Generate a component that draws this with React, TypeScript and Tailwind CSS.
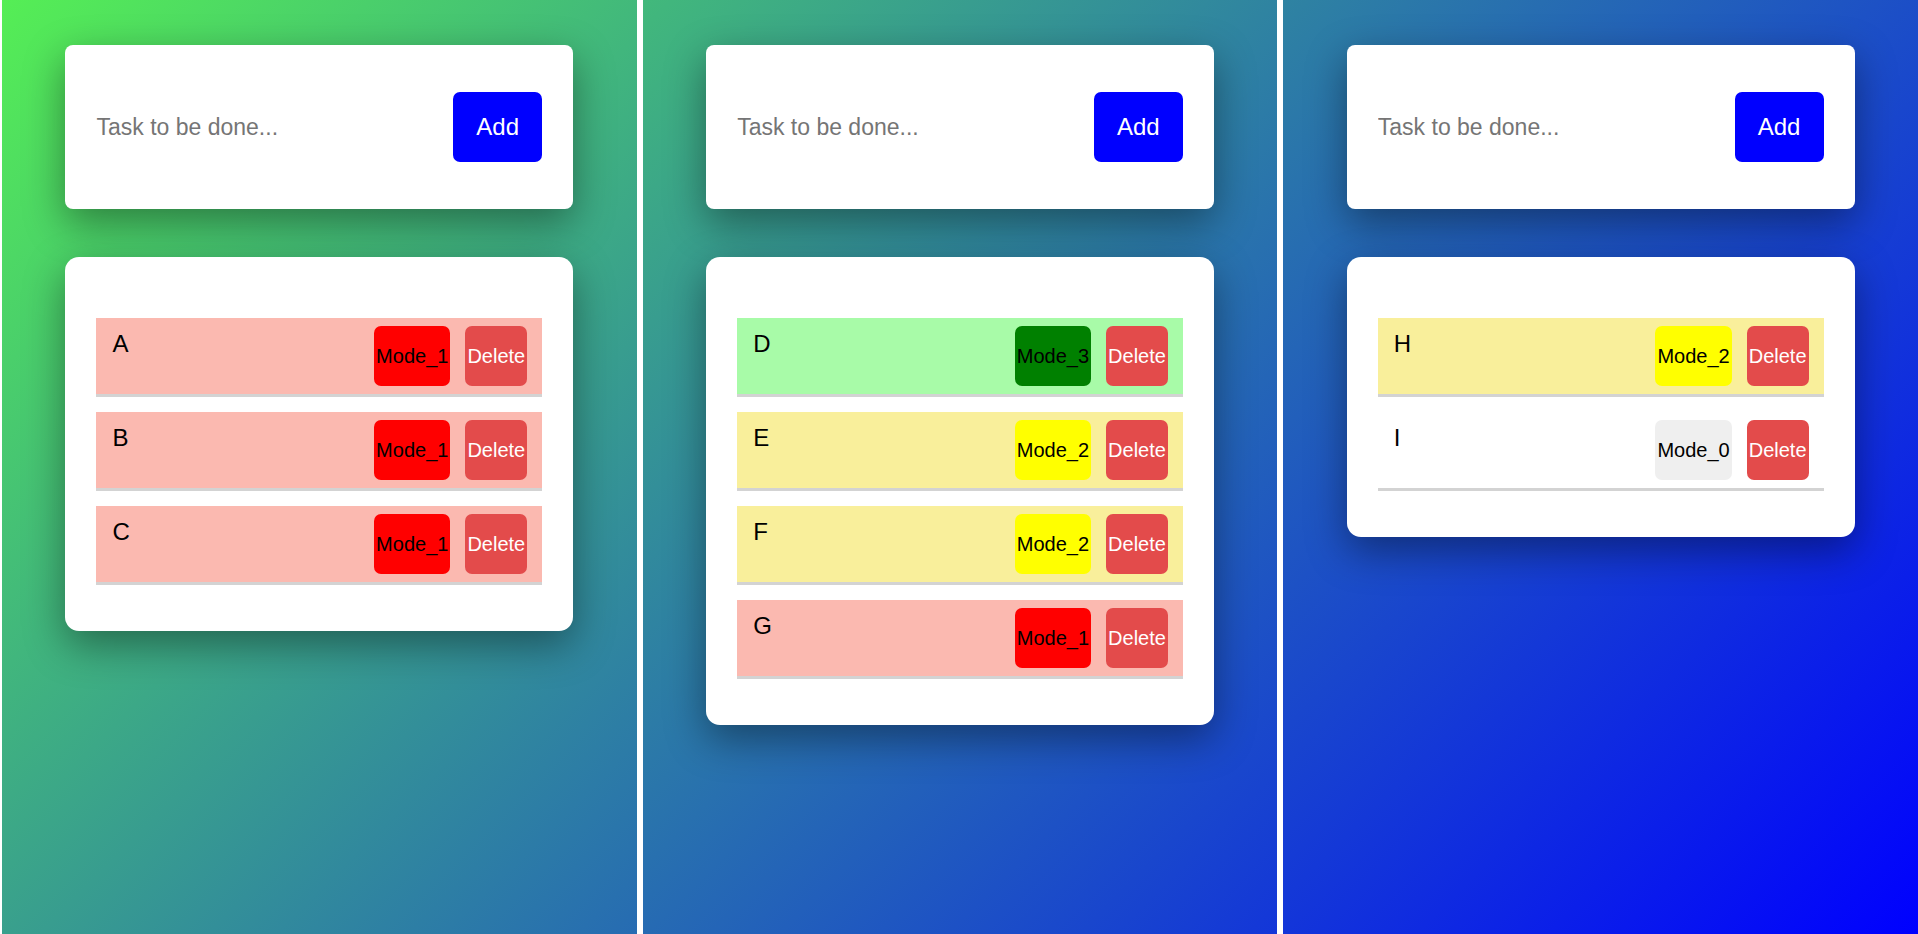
type Task = { label: string; mode: 0 | 1 | 2 | 3 };

const modeStyles = {
  0: { row: 'bg-white', btn: 'bg-[#efefef]' },
  1: { row: 'bg-[#fbb9b0]', btn: 'bg-[#ff0000]' },
  2: { row: 'bg-[#f9ef9b]', btn: 'bg-[#ffff00]' },
  3: { row: 'bg-[#a8fba8]', btn: 'bg-[#008000]' },
};

const columns: Task[][] = [
  [
    { label: 'A', mode: 1 },
    { label: 'B', mode: 1 },
    { label: 'C', mode: 1 },
  ],
  [
    { label: 'D', mode: 3 },
    { label: 'E', mode: 2 },
    { label: 'F', mode: 2 },
    { label: 'G', mode: 1 },
  ],
  [
    { label: 'H', mode: 2 },
    { label: 'I', mode: 0 },
  ],
];

function TodoRow({ task }: { task: Task }) {
  const s = modeStyles[task.mode];
  return (
    <div className={`${s.row} flex items-start justify-between pl-4 pr-[15px] py-2 border-b-[3px] border-[#d3d3d3]`}>
      <span className="text-[24px] text-black">{task.label}</span>
      <div className="flex gap-[15px]">
        <button className={`${s.btn} h-[60px] px-[2px] rounded-[7px] text-[20px] text-black`}>
          Mode_{task.mode}
        </button>
        <button className="bg-[#e34b4b] h-[60px] px-[2px] rounded-[7px] text-[20px] text-white">
          Delete
        </button>
      </div>
    </div>
  );
}

function TodoColumn({ tasks }: { tasks: Task[] }) {
  return (
    <div className="flex-1 flex flex-col items-center pt-[45px]">
      {/* input card */}
      <div className="w-[80%] bg-white rounded-lg px-[31px] py-[47px] flex items-center justify-between shadow-[0_14px_40px_rgba(0,0,0,0.4)]">
        <input
          className="flex-1 min-w-0 text-[23px] text-black placeholder:text-[#757575] outline-none bg-transparent"
          placeholder="Task to be done..."
        />
        <button className="w-[89px] h-[70px] bg-[#0000ff] text-white text-[24px] rounded-[7px]">Add</button>
      </div>

      {/* list card */}
      <div className="w-[80%] mt-[48px] bg-white rounded-[14px] px-[31px] pt-[61px] pb-[46px] flex flex-col gap-[15px] shadow-[0_14px_40px_rgba(0,0,0,0.4)]">
        {tasks.map((t) => (
          <TodoRow key={t.label} task={t} />
        ))}
      </div>
    </div>
  );
}

export default function App() {
  return (
    <div
      className="min-h-screen flex border-l-2 border-white bg-[linear-gradient(135deg,#55ee55,#0000ff)]"
      style={{ fontFamily: '"Liberation Sans", Arial, sans-serif' }}
    >
      <TodoColumn tasks={columns[0]} />
      <div className="w-[6px] bg-white" />
      <TodoColumn tasks={columns[1]} />
      <div className="w-[6px] bg-white" />
      <TodoColumn tasks={columns[2]} />
    </div>
  );
}
